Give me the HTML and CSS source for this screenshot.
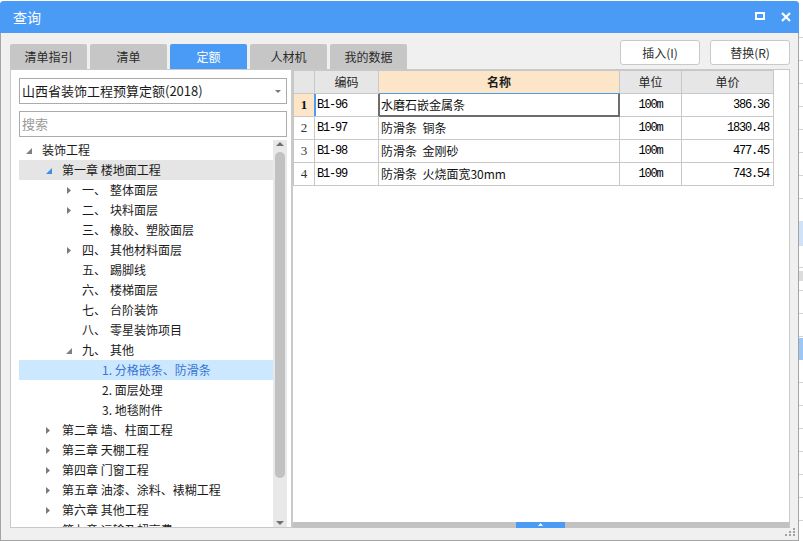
FILE: index.html
```html
<!DOCTYPE html>
<html lang="zh-CN">
<head>
<meta charset="utf-8">
<title>查询</title>
<link rel="stylesheet" href="styles.css">
</head>
<body>
<div class="desk">
  <div class="dialog">
    <div class="titlebar">
      <span class="title">查询</span>
      <span class="tb-icons">
        <svg class="ic-max" width="10" height="8" viewBox="0 0 10 8"><rect x="1" y="1" width="8" height="6" fill="none" stroke="#fff" stroke-width="2"/></svg>
        <svg class="ic-close" width="10" height="10" viewBox="0 0 10 10"><path d="M1 1L9 9M9 1L1 9" stroke="#fff" stroke-width="2.2" fill="none"/></svg>
      </span>
    </div>

    <div class="toolbar">
      <div class="tabs">
        <div class="tab">清单指引</div>
        <div class="tab">清单</div>
        <div class="tab active">定额</div>
        <div class="tab">人材机</div>
        <div class="tab">我的数据</div>
      </div>
      <div class="btns">
        <button class="btn">插入(I)</button>
        <button class="btn">替换(R)</button>
      </div>
    </div>

    <div class="main">
      <div class="left">
        <div class="select">
          <span>山西省装饰工程预算定额(2018)</span>
          <svg width="6" height="3" viewBox="0 0 6 3"><path d="M0 0H6L3 3Z" fill="#777"/></svg>
        </div>
        <div class="search">搜索</div>
        <div class="treewrap">
          <div class="tree">
            <div class="node l0"><span class="tg"><svg class="ex" width="6" height="6" viewBox="0 0 6 6"><path d="M6 0V6H0Z" fill="#808080"/></svg></span><span>装饰工程</span></div>
            <div class="node l1 hover"><span class="tg"><svg class="ex" width="6" height="6" viewBox="0 0 6 6"><path d="M6 0V6H0Z" fill="#3d8ee8"/></svg></span><span>第一章 楼地面工程</span></div>
            <div class="node l2"><span class="tg"><svg class="co" width="4" height="7" viewBox="0 0 4 7"><path d="M0 0L4 3.5L0 7Z" fill="#7a7a7a"/></svg></span><span class="num">一、</span><span>整体面层</span></div>
            <div class="node l2"><span class="tg"><svg class="co" width="4" height="7" viewBox="0 0 4 7"><path d="M0 0L4 3.5L0 7Z" fill="#7a7a7a"/></svg></span><span class="num">二、</span><span>块料面层</span></div>
            <div class="node l2"><span class="tg"></span><span class="num">三、</span><span>橡胶、塑胶面层</span></div>
            <div class="node l2"><span class="tg"><svg class="co" width="4" height="7" viewBox="0 0 4 7"><path d="M0 0L4 3.5L0 7Z" fill="#7a7a7a"/></svg></span><span class="num">四、</span><span>其他材料面层</span></div>
            <div class="node l2"><span class="tg"></span><span class="num">五、</span><span>踢脚线</span></div>
            <div class="node l2"><span class="tg"></span><span class="num">六、</span><span>楼梯面层</span></div>
            <div class="node l2"><span class="tg"></span><span class="num">七、</span><span>台阶装饰</span></div>
            <div class="node l2"><span class="tg"></span><span class="num">八、</span><span>零星装饰项目</span></div>
            <div class="node l2"><span class="tg"><svg class="ex" width="6" height="6" viewBox="0 0 6 6"><path d="M6 0V6H0Z" fill="#808080"/></svg></span><span class="num">九、</span><span>其他</span></div>
            <div class="node l3 selected"><span class="tg"></span><span>1. 分格嵌条、防滑条</span></div>
            <div class="node l3"><span class="tg"></span><span>2. 面层处理</span></div>
            <div class="node l3"><span class="tg"></span><span>3. 地毯附件</span></div>
            <div class="node l1"><span class="tg"><svg class="co1" width="4" height="7" viewBox="0 0 4 7"><path d="M0 0L4 3.5L0 7Z" fill="#7a7a7a"/></svg></span><span>第二章 墙、柱面工程</span></div>
            <div class="node l1"><span class="tg"><svg class="co1" width="4" height="7" viewBox="0 0 4 7"><path d="M0 0L4 3.5L0 7Z" fill="#7a7a7a"/></svg></span><span>第三章 天棚工程</span></div>
            <div class="node l1"><span class="tg"><svg class="co1" width="4" height="7" viewBox="0 0 4 7"><path d="M0 0L4 3.5L0 7Z" fill="#7a7a7a"/></svg></span><span>第四章 门窗工程</span></div>
            <div class="node l1"><span class="tg"><svg class="co1" width="4" height="7" viewBox="0 0 4 7"><path d="M0 0L4 3.5L0 7Z" fill="#7a7a7a"/></svg></span><span>第五章 油漆、涂料、裱糊工程</span></div>
            <div class="node l1"><span class="tg"><svg class="co1" width="4" height="7" viewBox="0 0 4 7"><path d="M0 0L4 3.5L0 7Z" fill="#7a7a7a"/></svg></span><span>第六章 其他工程</span></div>
            <div class="node l1"><span class="tg"><svg class="co1" width="4" height="7" viewBox="0 0 4 7"><path d="M0 0L4 3.5L0 7Z" fill="#7a7a7a"/></svg></span><span>第七章 运输及超高费</span></div>
          </div>
          <div class="vscroll">
            <svg class="arr-up" width="8" height="4" viewBox="0 0 8 4"><path d="M0 4L4 0L8 4Z" fill="#707070"/></svg>
            <div class="vthumb"></div>
            <svg class="arr-dn" width="8" height="4" viewBox="0 0 8 4"><path d="M0 0L4 4L8 0Z" fill="#707070"/></svg>
          </div>
        </div>
      </div>

      <div class="right">
        <div class="grid-area">
          <table class="grid">
            <colgroup>
              <col class="c-no"><col class="c-code"><col class="c-name"><col class="c-unit"><col class="c-price">
            </colgroup>
            <thead>
              <tr>
                <th></th>
                <th>编码</th>
                <th class="hl">名称</th>
                <th>单位</th>
                <th>单价</th>
              </tr>
            </thead>
            <tbody>
              <tr class="cur">
                <td class="no">1</td>
                <td class="code">B1-96</td>
                <td class="name">水磨石嵌金属条</td>
                <td class="unit">100m</td>
                <td class="price">386.36</td>
              </tr>
              <tr>
                <td class="no">2</td>
                <td class="code">B1-97</td>
                <td class="name">防滑条&nbsp; 铜条</td>
                <td class="unit">100m</td>
                <td class="price">1830.48</td>
              </tr>
              <tr>
                <td class="no">3</td>
                <td class="code">B1-98</td>
                <td class="name">防滑条&nbsp; 金刚砂</td>
                <td class="unit">100m</td>
                <td class="price">477.45</td>
              </tr>
              <tr>
                <td class="no">4</td>
                <td class="code">B1-99</td>
                <td class="name">防滑条&nbsp; 火烧面宽30mm</td>
                <td class="unit">100m</td>
                <td class="price">743.54</td>
              </tr>
            </tbody>
          </table>
        </div>
        <div class="hscroll">
          <div class="hthumb"><svg width="5" height="3" viewBox="0 0 5 3"><path d="M0 3L2.5 0L5 3Z" fill="#fff"/></svg></div>
        </div>
      </div>
    </div>

    <svg class="grip" width="11" height="9" viewBox="0 0 11 9">
      <rect x="8" y="0" width="2" height="2" fill="#a3a3a3"/>
      <rect x="4" y="3" width="2" height="2" fill="#a3a3a3"/>
      <rect x="8" y="3" width="2" height="2" fill="#a3a3a3"/>
      <rect x="0" y="6" width="2" height="2" fill="#a3a3a3"/>
      <rect x="4" y="6" width="2" height="2" fill="#a3a3a3"/>
      <rect x="8" y="6" width="2" height="2" fill="#a3a3a3"/>
    </svg>
  </div>
</div>
</body>
</html>
```
FILE: styles.css
```css
* { box-sizing: border-box; }

html, body {
  margin: 0;
  padding: 0;
}

body {
  background: #ffffff;
  font-family: "Noto Sans CJK SC", "Noto Sans", sans-serif;
  font-size: 12px;
  color: #1e1e1e;
  overflow: hidden;
}

.desk {
  position: relative;
  width: 803px;
  height: 541px;
  overflow: hidden;
  background:
    linear-gradient(#cfe2f8, #cfe2f8) 0 221px / 100% 25px no-repeat,
    linear-gradient(#dcdcdc, #dcdcdc) 0 271px / 100% 10px no-repeat,
    linear-gradient(#9cc6f4, #9cc6f4) 0 338px / 100% 22px no-repeat,
    repeating-linear-gradient(to bottom, transparent 0 22px, #d2d2d2 22px 23px) 0 15px / 100% 100% no-repeat,
    #ffffff;
}

.dialog {
  position: absolute;
  left: 0;
  top: 1px;
  width: 799px;
  height: 540px;
  background: #f0f0f0;
  border: 1px solid #a4a4a4;
  border-top: 0;
  border-radius: 4px 4px 0 0;
  display: flex;
  flex-direction: column;
}

/* title bar */
.titlebar {
  height: 32px;
  margin: 0 -1px;
  background: #4a9bf6;
  color: #ffffff;
  border-radius: 4px 4px 0 0;
  display: flex;
  align-items: center;
  justify-content: space-between;
  padding: 0 8px 0 13px;
}

.title {
  font-size: 14px;
  line-height: 16px;
}

.tb-icons {
  display: flex;
  align-items: center;
  gap: 16px;
  margin-top: -2px;
}

.tb-icons svg { display: block; }
.ic-close { margin-top: 1px; }

/* tabs + buttons */
.toolbar {
  height: 36px;
  display: flex;
  justify-content: space-between;
  align-items: flex-start;
  padding: 0 8px 0 9px;
}

.tabs {
  display: flex;
  gap: 3px;
  margin-top: 11px;
}

.tab {
  width: 77px;
  height: 25px;
  background: #c6c6c6;
  border-radius: 2px 2px 0 0;
  display: flex;
  align-items: center;
  justify-content: center;
  color: #2a2a2a;
  font-size: 12px;
  line-height: 14px;
}

.tab.active {
  background: #4a9bf6;
  color: #ffffff;
}

.btns {
  display: flex;
  gap: 10px;
  margin-top: 7px;
}

.btn {
  width: 80px;
  height: 25px;
  padding: 0;
  background: #ffffff;
  border: 1px solid #c9c9c9;
  border-radius: 3px;
  font-family: "Noto Sans CJK SC", "Noto Sans", sans-serif;
  font-size: 12px;
  color: #2e2e2e;
}

/* main area */
.main {
  height: 459px;
  display: flex;
  padding: 0 8px 0 9px;
}

.left {
  width: 282px;
  background: #ffffff;
  border: 1px solid #c9c9c9;
  padding: 8px 4px 0 8px;
  display: flex;
  flex-direction: column;
}

.select {
  height: 26px;
  border: 1px solid #ababab;
  display: flex;
  align-items: center;
  justify-content: space-between;
  padding: 0 5px 0 2px;
  font-size: 13px;
  line-height: 16px;
  color: #1a1a1a;
}

.select svg { display: block; }

.search {
  height: 26px;
  margin-top: 7px;
  border: 1px solid #ababab;
  padding-left: 2px;
  display: flex;
  align-items: center;
  font-size: 13px;
  line-height: 16px;
  color: #9a9a9a;
}

.treewrap {
  margin-top: 3px;
  height: 387px;
  display: flex;
}

.tree {
  flex: 1;
  overflow: hidden;
}

.node {
  height: 20px;
  display: flex;
  align-items: center;
  white-space: nowrap;
  font-size: 12px;
  line-height: 20px;
  color: #1a1a1a;
}

.node.l0 { padding-left: 3px; }
.node.l1 { padding-left: 23px; }
.node.l2 { padding-left: 43px; }
.node.l3 { padding-left: 63px; }

.node.hover { background: #e5e5e5; }
.node.selected { background: #cce8ff; color: #3874d2; }

.tg {
  width: 20px;
  height: 20px;
  flex: none;
  display: flex;
  align-items: center;
}

.tg svg { display: block; }
.tg .ex { margin-left: 4px; margin-top: 1px; }
.tg .co { margin-left: 5px; }
.tg .co1 { margin-left: 4px; }

.num {
  width: 28px;
  flex: none;
}

.vscroll {
  width: 14px;
  flex: none;
  background: #e8e8e8;
  display: flex;
  flex-direction: column;
  align-items: center;
}

.vscroll svg { display: block; }
.arr-up { margin-top: 2px; }

.vthumb {
  width: 10px;
  height: 326px;
  margin-top: 6px;
  background: #c1c1c1;
  border-radius: 5px;
}

.arr-dn { margin-top: auto; margin-bottom: 2px; }

/* right grid */
.right {
  width: 498px;
  background: #ffffff;
  border: 1px solid #c9c9c9;
  border-bottom: 0;
  display: flex;
  flex-direction: column;
}

.grid-area {
  flex: 1;
  overflow: hidden;
}

.grid {
  border-collapse: collapse;
  table-layout: fixed;
  width: 480px;
}

.c-no { width: 21px; }
.c-code { width: 64px; }
.c-name { width: 241px; }
.c-unit { width: 62px; }
.c-price { width: 92px; }

.grid th,
.grid td {
  border: 1px solid #c8c8c8;
  height: 23px;
  padding: 0;
  white-space: nowrap;
  overflow: hidden;
}

.grid th {
  background: #e6e6e6;
  font-weight: normal;
  font-size: 12px;
  line-height: 14px;
  color: #1e1e1e;
  text-align: center;
}

.grid th.hl {
  background: #fde5c8;
  font-weight: bold;
  border-bottom-color: #4a9bf6;
}

.grid td {
  font-size: 12px;
  line-height: 14px;
  color: #111111;
}

.grid td.no {
  text-align: center;
  font-family: "Liberation Serif", serif;
  font-size: 13px;
  color: #333333;
}

.grid td.code,
.grid td.unit,
.grid td.price {
  font-family: "Liberation Mono", monospace;
  font-size: 12px;
  letter-spacing: -1.2px;
  color: #000000;
}

.grid td.code { padding-left: 2px; }
.grid td.name { padding-left: 2px; }
.grid td.unit { text-align: center; }
.grid td.price { text-align: right; padding-right: 4px; }

.grid tr.cur td.no {
  background: #fde5c8;
  font-weight: bold;
  color: #111111;
  border-right-color: #4a9bf6;
}

.grid tr.cur td.code {
  box-shadow: inset 1px 0 #4a9bf6;
  border-right-color: #6d6d6d;
}

.grid tr.cur td.name {
  border-right-color: #6d6d6d;
  border-bottom-color: #6d6d6d;
  box-shadow: inset 1px 0 #6d6d6d, inset -1px 0 #6d6d6d, inset 0 -1px #6d6d6d;
}

.hscroll {
  height: 6px;
  flex: none;
  background: #c2c2c2;
  display: flex;
}

.hthumb {
  width: 49px;
  height: 6px;
  margin-left: 223px;
  background: #4a9bf6;
  display: flex;
  justify-content: center;
  align-items: flex-start;
  padding-top: 1px;
}

.hthumb svg { display: block; }

.grip {
  position: absolute;
  right: 2px;
  bottom: 3px;
  display: block;
}
```
